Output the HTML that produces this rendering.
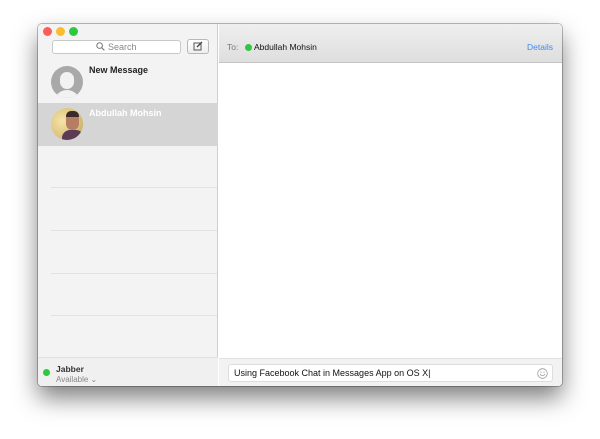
<!DOCTYPE html><html><head><style>
*{margin:0;padding:0;box-sizing:border-box}
body{width:600px;height:439px;background:#fff;font-family:"Liberation Sans",sans-serif;position:relative;overflow:hidden}
.win{position:absolute;left:38px;top:24px;width:524px;height:362px;border-radius:4px;overflow:hidden;box-shadow:0 12px 24px rgba(0,0,0,.5),0 0 0 1px rgba(0,0,0,.25);background:#fff}
.side{position:absolute;left:0;top:0;width:180px;height:362px;background:#f3f3f3;border-right:1px solid #cfcfcf}
.main{position:absolute;left:181px;top:0;right:0;height:362px}
.hdr{position:absolute;left:0;right:0;top:0;height:39px;background:linear-gradient(#efefef,#dedede);border-bottom:1px solid #c4c4c4}
.dot{position:absolute;top:3px;width:9px;height:9px;border-radius:50%}
.abs{position:absolute}
.sep{position:absolute;left:13px;right:0;height:1px;background:#e2e2e2}
</style></head><body>
<div class="win">
<div class="side">
<div class="dot" style="left:5px;background:#fc5f57"></div>
<div class="dot" style="left:18px;background:#fdbc2e"></div>
<div class="dot" style="left:31px;background:#2bc840"></div>
<div class="abs" style="left:14px;top:16px;width:129px;height:14px;background:#fff;border:1px solid #c8c8c8;border-radius:3px;font-size:9px;color:#888;text-align:center;line-height:12px">
<svg width="9" height="9" viewBox="0 0 9 9" style="vertical-align:-1px"><circle cx="3.6" cy="3.6" r="2.8" fill="none" stroke="#777" stroke-width="1"/><path d="M5.6 5.6L8.4 8.4" stroke="#777" stroke-width="1.1"/></svg> Search</div>
<div class="abs" style="left:149px;top:15px;width:22px;height:15px;background:linear-gradient(#fff,#eee);border:1px solid #b8b8b8;border-radius:3px">
<svg width="20" height="13" viewBox="0 0 20 13"><rect x="6" y="3" width="7" height="7" fill="none" stroke="#555" stroke-width="1"/><path d="M9 7L14 2" stroke="#444" stroke-width="1.3"/></svg></div>
<div class="abs" style="left:13px;top:42px;width:32px;height:32px;border-radius:50%;background:#a9a9a9;overflow:hidden"><div class="abs" style="left:9px;top:6px;width:14px;height:17px;border-radius:7px;background:#f2f2f2"></div><div class="abs" style="left:3px;top:24px;width:26px;height:14px;border-radius:13px 13px 0 0;background:#f2f2f2"></div></div>
<div class="abs" style="left:51px;top:41px;font-size:9px;font-weight:bold;color:#222">New Message</div>
<div class="abs" style="left:0;top:79px;width:180px;height:43px;background:#d5d5d5"></div>
<div class="abs" style="left:13px;top:84px;width:32px;height:32px;border-radius:50%;background:radial-gradient(circle at 35% 40%,#f6e4a8,#d9c27a 60%,#b99b5a);overflow:hidden"><div class="abs" style="left:15px;top:5px;width:13px;height:17px;border-radius:6px;background:#b57d62"></div><div class="abs" style="left:15px;top:3px;width:13px;height:6px;border-radius:5px 5px 0 0;background:#3a2a28"></div><div class="abs" style="left:11px;top:22px;width:22px;height:12px;background:#5d3b57;border-radius:8px 8px 0 0"></div></div>
<div class="abs" style="left:51px;top:84px;font-size:9px;font-weight:bold;color:#fff">Abdullah Mohsin</div>
<div class="sep" style="top:163px"></div><div class="sep" style="top:206px"></div><div class="sep" style="top:249px"></div><div class="sep" style="top:291px"></div>
<div class="abs" style="left:0;top:333px;width:180px;height:29px;background:#f0f0f0;border-top:1px solid #e0e0e0"></div>
<div class="abs" style="left:5px;top:345px;width:7px;height:7px;border-radius:50%;background:#2bc840"></div>
<div class="abs" style="left:18px;top:340px;font-size:8.5px;font-weight:bold;color:#333">Jabber</div>
<div class="abs" style="left:18px;top:351px;font-size:8px;color:#888">Available ⌄</div>
</div>
<div class="main">
<div class="hdr">
<div class="abs" style="left:8px;top:18px;font-size:8.5px;color:#777">To:</div>
<div class="abs" style="left:26px;top:20px;width:7px;height:7px;border-radius:50%;background:#2bc840"></div>
<div class="abs" style="left:35px;top:18px;font-size:8.5px;color:#111">Abdullah Mohsin</div>
<div class="abs" style="right:9px;top:18px;font-size:8.5px;color:#3b8ced">Details</div>
</div>
<div class="abs" style="left:0;right:0;top:334px;height:28px;background:#f2f2f2;border-top:1px solid #e2e2e2"></div>
<div class="abs" style="left:9px;top:340px;width:325px;height:18px;background:#fff;border:1px solid #ddd;border-radius:3px;font-size:9px;color:#111;line-height:16px;padding-left:5px">Using Facebook Chat in Messages App on OS X|</div>
<svg class="abs" style="left:318px;top:344px" width="11" height="11" viewBox="0 0 11 11"><circle cx="5.5" cy="5.5" r="4.8" fill="none" stroke="#999" stroke-width=".8"/><path d="M3 6.2Q5.5 9 8 6.2" fill="none" stroke="#999" stroke-width=".8"/><circle cx="4" cy="4.2" r=".6" fill="#999"/><circle cx="7" cy="4.2" r=".6" fill="#999"/></svg>
</div>
</div>
</body></html>
